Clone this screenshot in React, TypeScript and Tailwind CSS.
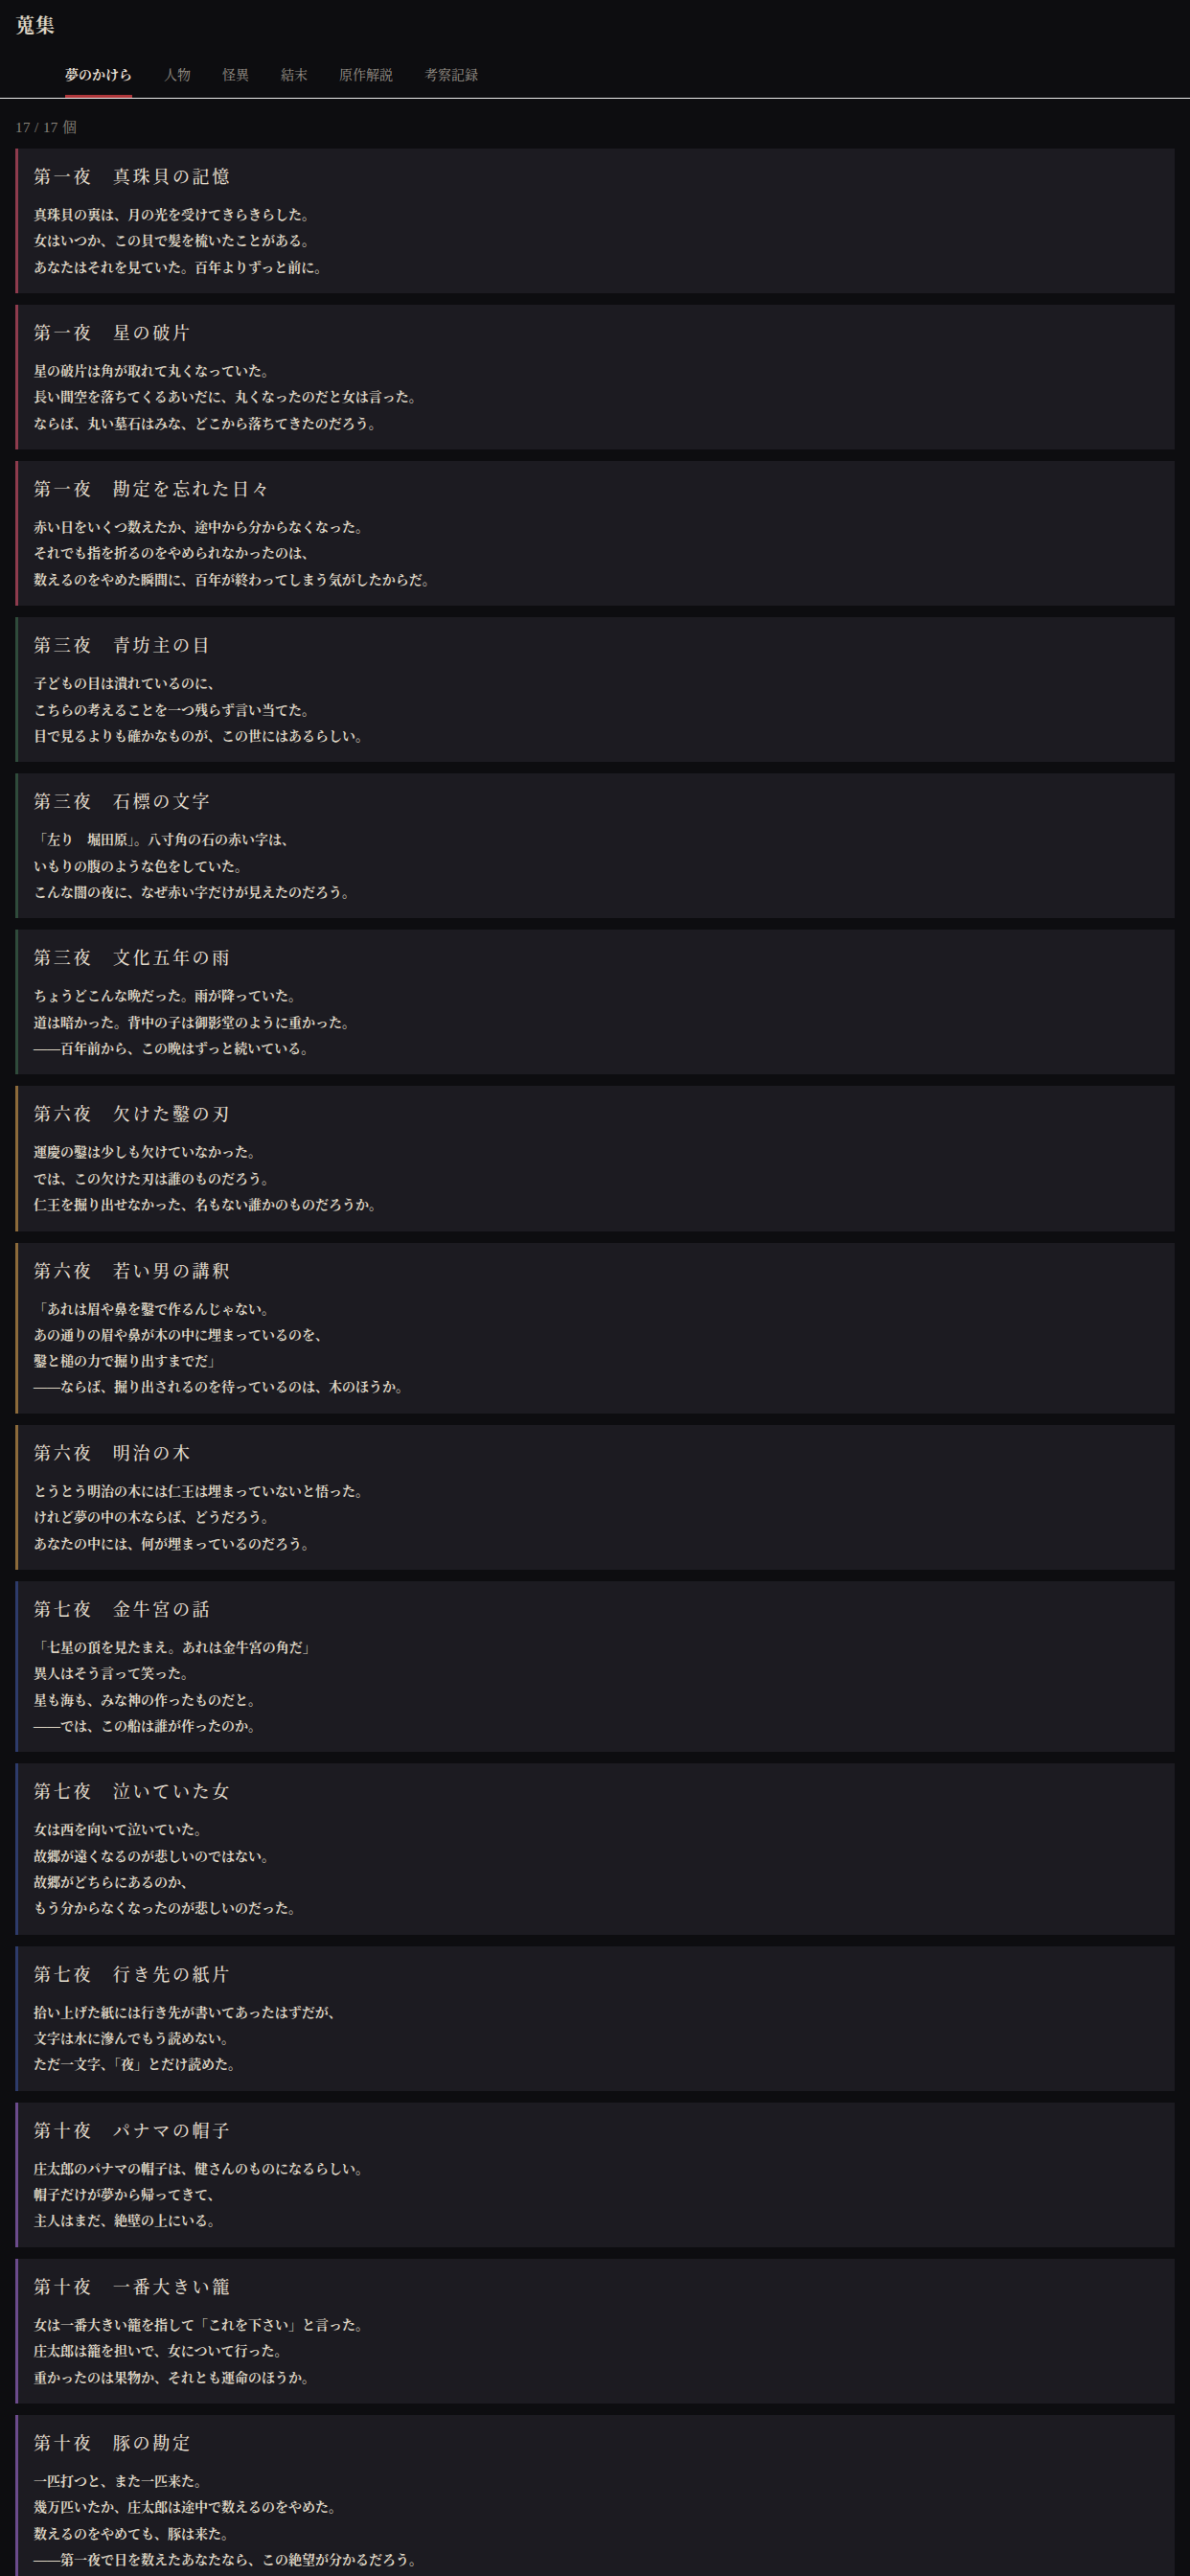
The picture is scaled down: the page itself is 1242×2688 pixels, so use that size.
const font = "font-['Liberation_Serif','Noto_Serif_CJK_JP','Noto_Sans_CJK_JP',serif]";

type Item = { night: string; title: string; lines: string[] };

const accent: Record<string, string> = {
  第一夜: "border-[#8e3b4d]",
  第三夜: "border-[#2f4b3b]",
  第六夜: "border-[#8c6a3a]",
  第七夜: "border-[#2d3b6b]",
  第十夜: "border-[#6b4b8c]",
};

const items: Item[] = [
  { night: "第一夜", title: "真珠貝の記憶", lines: ["真珠貝の裏は、月の光を受けてきらきらした。", "女はいつか、この貝で髪を梳いたことがある。", "あなたはそれを見ていた。百年よりずっと前に。"] },
  { night: "第一夜", title: "星の破片", lines: ["星の破片は角が取れて丸くなっていた。", "長い間空を落ちてくるあいだに、丸くなったのだと女は言った。", "ならば、丸い墓石はみな、どこから落ちてきたのだろう。"] },
  { night: "第一夜", title: "勘定を忘れた日々", lines: ["赤い日をいくつ数えたか、途中から分からなくなった。", "それでも指を折るのをやめられなかったのは、", "数えるのをやめた瞬間に、百年が終わってしまう気がしたからだ。"] },
  { night: "第三夜", title: "青坊主の目", lines: ["子どもの目は潰れているのに、", "こちらの考えることを一つ残らず言い当てた。", "目で見るよりも確かなものが、この世にはあるらしい。"] },
  { night: "第三夜", title: "石標の文字", lines: ["「左り　堀田原」。八寸角の石の赤い字は、", "いもりの腹のような色をしていた。", "こんな闇の夜に、なぜ赤い字だけが見えたのだろう。"] },
  { night: "第三夜", title: "文化五年の雨", lines: ["ちょうどこんな晩だった。雨が降っていた。", "道は暗かった。背中の子は御影堂のように重かった。", "——百年前から、この晩はずっと続いている。"] },
  { night: "第六夜", title: "欠けた鑿の刃", lines: ["運慶の鑿は少しも欠けていなかった。", "では、この欠けた刃は誰のものだろう。", "仁王を掘り出せなかった、名もない誰かのものだろうか。"] },
  { night: "第六夜", title: "若い男の講釈", lines: ["「あれは眉や鼻を鑿で作るんじゃない。", "あの通りの眉や鼻が木の中に埋まっているのを、", "鑿と槌の力で掘り出すまでだ」", "——ならば、掘り出されるのを待っているのは、木のほうか。"] },
  { night: "第六夜", title: "明治の木", lines: ["とうとう明治の木には仁王は埋まっていないと悟った。", "けれど夢の中の木ならば、どうだろう。", "あなたの中には、何が埋まっているのだろう。"] },
  { night: "第七夜", title: "金牛宮の話", lines: ["「七星の頂を見たまえ。あれは金牛宮の角だ」", "異人はそう言って笑った。", "星も海も、みな神の作ったものだと。", "——では、この船は誰が作ったのか。"] },
  { night: "第七夜", title: "泣いていた女", lines: ["女は西を向いて泣いていた。", "故郷が遠くなるのが悲しいのではない。", "故郷がどちらにあるのか、", "もう分からなくなったのが悲しいのだった。"] },
  { night: "第七夜", title: "行き先の紙片", lines: ["拾い上げた紙には行き先が書いてあったはずだが、", "文字は水に滲んでもう読めない。", "ただ一文字、「夜」とだけ読めた。"] },
  { night: "第十夜", title: "パナマの帽子", lines: ["庄太郎のパナマの帽子は、健さんのものになるらしい。", "帽子だけが夢から帰ってきて、", "主人はまだ、絶壁の上にいる。"] },
  { night: "第十夜", title: "一番大きい籠", lines: ["女は一番大きい籠を指して「これを下さい」と言った。", "庄太郎は籠を担いで、女について行った。", "重かったのは果物か、それとも運命のほうか。"] },
  { night: "第十夜", title: "豚の勘定", lines: ["一匹打つと、また一匹来た。", "幾万匹いたか、庄太郎は途中で数えるのをやめた。", "数えるのをやめても、豚は来た。", "——第一夜で日を数えたあなたなら、この絶望が分かるだろう。"] },
];

const tabs = ["夢のかけら", "人物", "怪異", "結末", "原作解説", "考察記録"];

const App = () => {
  return (
    <div className={`min-h-screen bg-[#0d0d10] text-[#ddd4c3] ${font}`}>
      {/* header */}
      <header className="border-b border-[#ececec]">
        <h1 className="px-4 pt-[13px] text-[20px] leading-7 font-bold tracking-[0.05em]">蒐集</h1>
        <nav className="mt-7 flex gap-[33px] pl-[68px]">
          {tabs.map((t, i) => (
            <button
              key={t}
              className={
                i === 0
                  ? "border-b-[3px] border-[#b0383c] pb-[10px] text-[14px] leading-5 font-bold text-[#e6dfd2]"
                  : "border-b-[3px] border-transparent pb-[10px] text-[14px] leading-5 text-[#9a948b]"
              }
            >
              {t}
            </button>
          ))}
        </nav>
      </header>

      <main className="flex flex-col gap-3 px-4 pt-[20px]">
        <p className="text-[15px] leading-5 text-[#8a847c] tracking-[0.03em]">17 / 17 個</p>
        {items.map((it) => (
          <article
            key={it.title}
            className={`border-l-[3px] ${accent[it.night]} bg-[#1c1b21] pl-4 pr-4 pt-4 pb-[13.2px]`}
          >
            <h2 className="text-[18px] leading-7 font-medium tracking-[0.15em] text-[#e3dccd]">
              {it.night}　{it.title}
            </h2>
            <div className="mt-3 text-[14px] leading-[27.3px] font-bold">
              {it.lines.map((l) => (
                <p key={l}>{l}</p>
              ))}
            </div>
          </article>
        ))}
      </main>
    </div>
  );
};

export default App;
